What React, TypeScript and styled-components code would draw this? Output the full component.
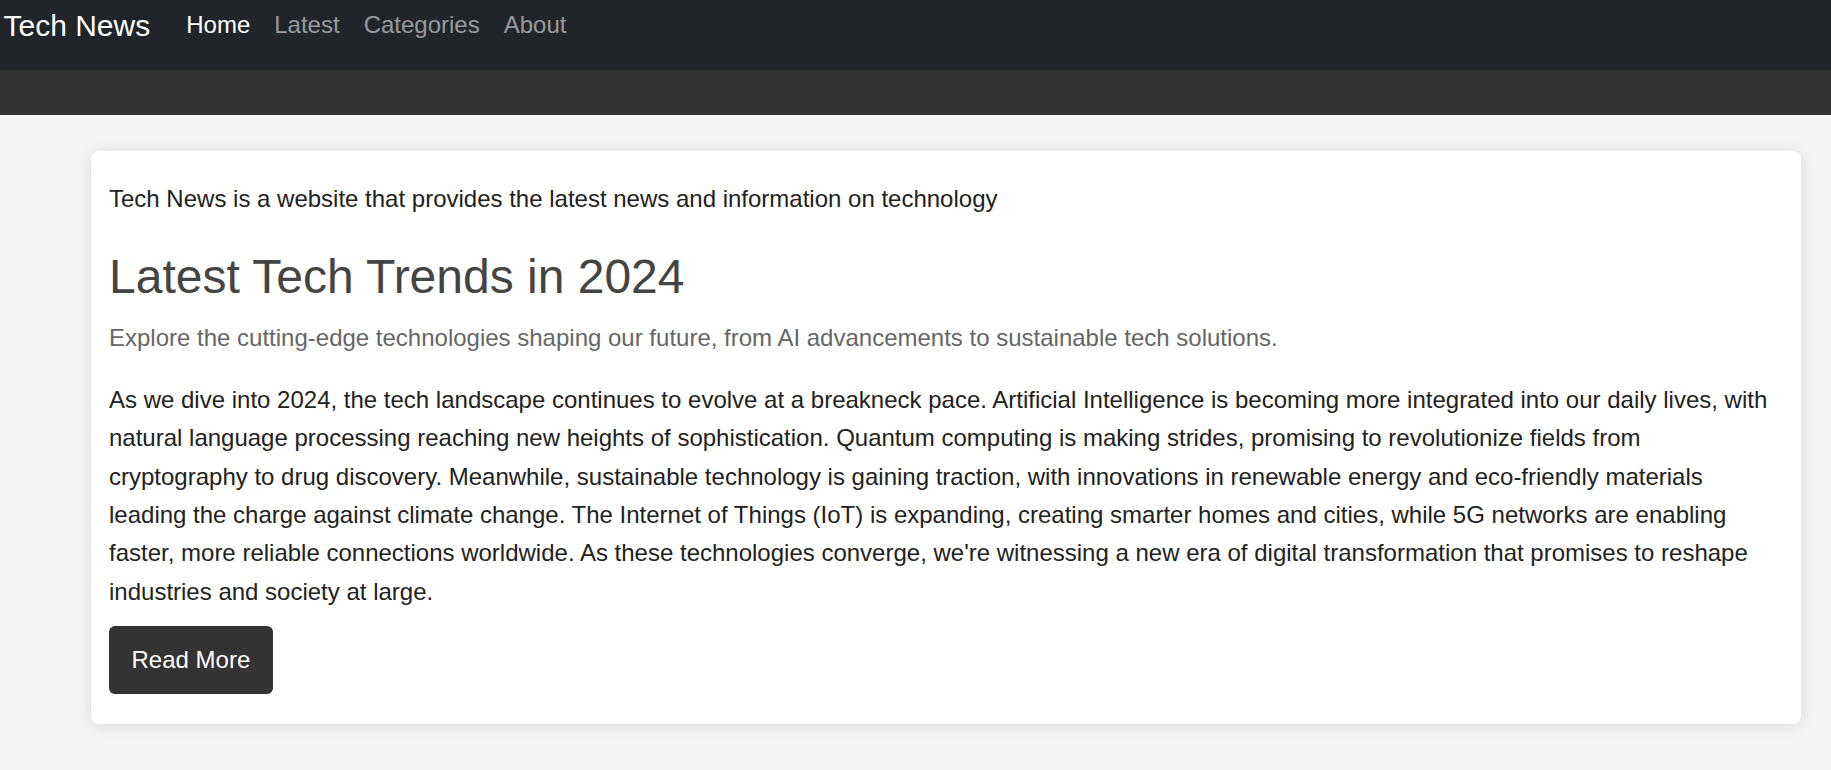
import React from "react";
import styled, { createGlobalStyle } from "styled-components";

const GlobalStyle = createGlobalStyle`
  body {
    margin: 0;
    background-color: #f4f4f4;
    font-family: "Liberation Sans", Arial, sans-serif;
  }
`;

const links = ["Home", "Latest", "Categories", "About"];

export default function App() {
  return (
    <>
      <GlobalStyle />
      <Navbar>
        <Brand href="#">Tech News</Brand>
        <NavList>
          {links.map((label, i) => (
            <li key={label}>
              <NavLink href="#" $active={i === 0}>
                {label}
              </NavLink>
            </li>
          ))}
        </NavList>
      </Navbar>
      <SubBar />
      <Main>
        <Card>
          <Intro>
            Tech News is a website that provides the latest news and
            information on technology
          </Intro>
          <Title>Latest Tech Trends in 2024</Title>
          <Subtitle>
            Explore the cutting-edge technologies shaping our future, from AI
            advancements to sustainable tech solutions.
          </Subtitle>
          <Body>
            As we dive into 2024, the tech landscape continues to evolve at a
            breakneck pace. Artificial Intelligence is becoming more integrated
            into our daily lives, with natural language processing reaching new
            heights of sophistication. Quantum computing is making strides,
            promising to revolutionize fields from cryptography to drug
            discovery. Meanwhile, sustainable technology is gaining traction,
            with innovations in renewable energy and eco-friendly materials
            leading the charge against climate change. The Internet of Things
            (IoT) is expanding, creating smarter homes and cities, while 5G
            networks are enabling faster, more reliable connections worldwide.
            As these technologies converge, we're witnessing a new era of
            digital transformation that promises to reshape industries and
            society at large.
          </Body>
          <div>
            <ReadMore>Read More</ReadMore>
          </div>
        </Card>
      </Main>
    </>
  );
}

const Navbar = styled.nav`
  display: flex;
  align-items: flex-start;
  height: 70px;
  padding-left: 3.5px;
  background-color: #212529;
  box-sizing: border-box;
`;

const Brand = styled.a`
  padding-top: 7.5px;
  margin-right: 24px;
  font-size: 30px;
  line-height: 36px;
  color: #fff;
  text-decoration: none;
  white-space: nowrap;
`;

const NavList = styled.ul`
  display: flex;
  margin: 0;
  padding: 0;
  list-style: none;
`;

const NavLink = styled.a<{ $active?: boolean }>`
  display: block;
  padding: 7px 12px 0;
  font-size: 24px;
  line-height: 36px;
  color: ${(p) => (p.$active ? "#fff" : "rgba(255, 255, 255, 0.55)")};
  text-decoration: none;
`;

const SubBar = styled.div`
  height: 45px;
  background-color: #333;
`;

const Main = styled.main`
  padding: 36px 30px 46px 91px;
`;

const Card = styled.section`
  padding: 29px 18px 30px;
  background-color: #fff;
  border-radius: 8px;
  box-shadow: 0 2px 15px rgba(0, 0, 0, 0.1);
`;

const Intro = styled.p`
  margin: 0;
  font-size: 24px;
  line-height: 38.4px;
  color: #222;
`;

const Title = styled.h1`
  margin: 30px 0 0;
  font-size: 48px;
  font-weight: 400;
  line-height: 57.6px;
  color: #444;
`;

const Subtitle = styled.p`
  margin: 13px 0 0;
  font-size: 24px;
  line-height: 38.4px;
  color: #666;
`;

const Body = styled.p`
  margin: 23.3px 0 0;
  font-size: 24px;
  line-height: 38.4px;
  color: #222;
`;

const ReadMore = styled.button`
  margin-top: 15px;
  padding: 20px 22.5px;
  border: none;
  border-radius: 6px;
  background-color: #333;
  color: #fff;
  font-family: inherit;
  font-size: 24px;
  line-height: 28px;
  cursor: pointer;
`;
